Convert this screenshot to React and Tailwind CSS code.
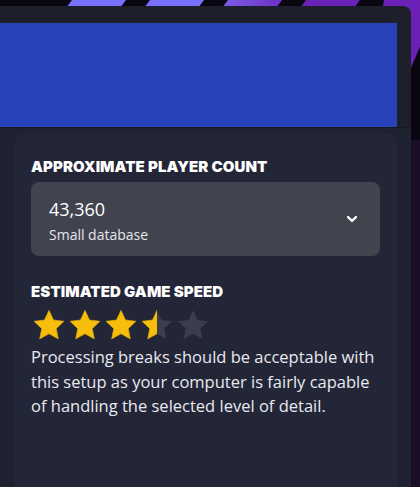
import { ChevronDown } from "lucide-react"

const STAR =
  "M12 1.6l3.1 6.6 7.2.9-5.3 5 1.4 7.1L12 17.7l-6.4 3.5 1.4-7.1-5.3-5 7.2-.9z"

const Star = ({ fill = 1, id }) => (
  <svg viewBox="0 0 24 24" className="w-[36px] h-[35px]">
    <defs>
      <clipPath id={id}>
        <rect x="0" y="0" width={24 * fill} height="24" />
      </clipPath>
    </defs>
    <path d={STAR} fill="#3b3d4b" />
    <path d={STAR} fill="#f6bd0c" stroke="#e0a800" strokeWidth="0.4" clipPath={`url(#${id})`} />
  </svg>
)

// background stripes across the top edge
const Stripes = () => (
  <svg className="absolute inset-0 w-full h-full" viewBox="0 0 420 487" preserveAspectRatio="none">
    <defs>
      <linearGradient id="sg" x1="0" x2="1">
        <stop offset="0" stopColor="#7a5ee8" />
        <stop offset="1" stopColor="#6c2fc4" />
      </linearGradient>
    </defs>
    <polygon points="72,0 126,0 120,8 66,8" fill="#7670fb" />
    <polygon points="150,0 204,0 198,8 144,8" fill="#7670fb" />
    <polygon points="228,0 282,0 276,8 222,8" fill="url(#sg)" />
    <polygon points="306,0 360,0 354,8 300,8" fill="#6a22b8" />
    <polygon points="384,0 440,0 380,140 360,140" fill="#6b20b6" />
  </svg>
)

export default function App() {
  return (
    <div className="relative w-full h-[487px] overflow-hidden bg-[#0a0611]" style={{ fontFamily: "'Open Sans', sans-serif" }}>
      <Stripes />
      <div className="relative flex h-full pt-[6px]">
        <div className="w-[411px] shrink-0 rounded-tr-lg bg-[#1d202b] flex flex-col">
          <div className="pt-[17px] pr-[14px]">
            <div className="h-[104px] bg-[#2743b9]" />
          </div>
          <div className="h-px bg-[#161822]" />
          <div className="flex-1 bg-[#1e2130] pt-[5px] px-[14px]">
            <div className="h-full rounded-t-xl bg-[#232637] px-[17px] pt-[24px]">
              <h2
                className="text-[15px] leading-[20px] font-black uppercase text-white tracking-[0.1px]"
                style={{ fontFamily: "Inter, sans-serif" }}
              >
                Approximate player count
              </h2>
              <button className="mt-[5px] w-full h-[74px] rounded-lg bg-[#41434f] flex items-center justify-between pl-[18px] pr-[20px] text-left">
                <div className="pt-[2px]">
                  <div className="text-[18px] leading-[24px] text-white">43,360</div>
                  <div className="mt-[5px] text-[14px] leading-[18px] text-[#e6e6ee]">Small database</div>
                </div>
                <ChevronDown className="w-[16px] h-[16px] text-white" strokeWidth={3.5} />
              </button>
              <h2
                className="mt-[26px] text-[15px] leading-[20px] font-black uppercase text-white tracking-[0.1px]"
                style={{ fontFamily: "Inter, sans-serif" }}
              >
                Estimated game speed
              </h2>
              <div className="mt-[6px] flex">
                <Star id="s1" />
                <Star id="s2" />
                <Star id="s3" />
                <Star id="s4" fill={0.5} />
                <Star id="s5" fill={0} />
              </div>
              <p className="mt-[2px] text-[16.5px] leading-[24.5px] text-[#e9e9f0]">
                Processing breaks should be acceptable with this setup as your computer is fairly capable of
                handling the selected level of detail.
              </p>
            </div>
          </div>
        </div>
        <div className="flex-1 mt-[134px] bg-[#1b0d25]" />
      </div>
    </div>
  )
}
